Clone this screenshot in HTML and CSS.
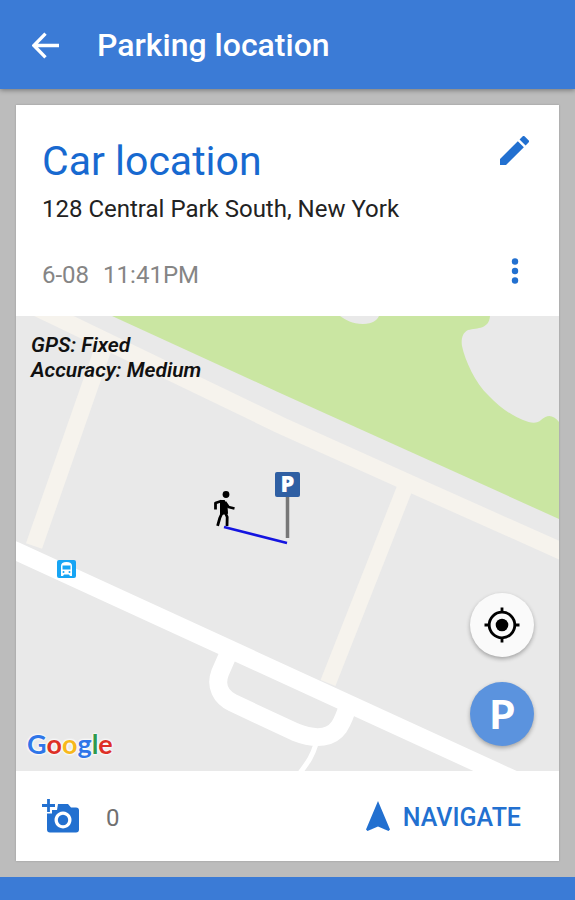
FILE: index.html
```html
<!DOCTYPE html>
<html lang="en">
<head>
<meta charset="utf-8">
<meta name="viewport" content="width=device-width, initial-scale=1">
<title>Parking location</title>
<link rel="stylesheet" href="styles.css">
</head>
<body>
<header class="app-bar">
  <button class="icon-button" type="button" aria-label="Back">
    <svg class="icon-back" viewBox="0 0 26 26"><path d="M13 1.500 1.800 13 13 24.500M2 13H26" fill="none" stroke="currentColor" stroke-width="3.200"/></svg>
  </button>
  <h1 class="app-title">Parking location</h1>
</header>
<main class="content">
  <article class="card">
    <section class="details">
      <div class="details-row">
        <h2 class="place">Car location</h2>
        <button class="icon-button" type="button" aria-label="Edit">
          <svg class="icon-edit" viewBox="3 3 18 18"><path fill="currentColor" d="M3 17.250V21h3.750L17.810 9.940l-3.750-3.750L3 17.250zM20.710 7.040a1 1 0 0 0 0-1.410l-2.340-2.340a1 1 0 0 0-1.410 0l-1.830 1.830 3.750 3.750 1.830-1.830z"/></svg>
        </button>
      </div>
      <p class="address">128 Central Park South, New York</p>
      <div class="details-row meta-row">
        <p class="meta"><span>6-08</span><span>11:41PM</span></p>
        <button class="icon-button" type="button" aria-label="More options">
          <svg class="icon-more" viewBox="0 0 28 28"><g fill="currentColor"><circle cx="14" cy="4.500" r="3.200"/><circle cx="14" cy="14" r="3.200"/><circle cx="14" cy="23.500" r="3.200"/></g></svg>
        </button>
      </div>
    </section>
    <section class="map" aria-label="Map">
      <svg class="map-canvas" viewBox="16 316 543 455" preserveAspectRatio="xMidYMid slice">
        <rect x="16" y="316" width="543" height="455" fill="#e9e9e9"/>
        <path fill="#cae6a2" d="M112 316 280 393 559 519V316z"/>
        <path fill="#e9e9e9" d="M340 316C346 320 352 324 363 324C373 324 377 320 379 316zM490 316C489 329 478 328 468 330C462 333 461 340 462 346C465 360 475 383 489 396C499 407 514 417 523 420C530 423 537 424 541 420C548 414 553 415 559 422V316z"/>
        <g fill="none" stroke="#f6f3ed">
          <path stroke-width="17" d="M20 300 54 316 280 425 420 488 570 555"/>
          <path stroke-width="17" d="M108 335 92 380 34 546"/>
          <path stroke-width="16" d="M408 480 404 490 328 683"/>
        </g>
        <g fill="none" stroke="#fff">
          <path stroke-width="18" d="M0 544 16 551 495 771 570 805"/>
          <path stroke-width="18" d="M230 650 220 673C215 686 221 697 233 703L295 732C318 741 332 737 339 727C344 719 346 713 348 705"/>
          <path stroke-width="5" d="M316 744C312 757 308 762 300 773"/>
        </g>
        <g>
          <rect x="57" y="560" width="19" height="18" rx="2" fill="#17a5f4"/>
          <path fill="#fff" d="M61 576V566Q61 562 66.500 562T72 566V576H70L69 574.500H64L63 576z"/>
          <path fill="#17a5f4" d="M62.500 565.500H70.500V569.500H62.500z"/>
          <circle cx="63.500" cy="572" r="1" fill="#17a5f4"/><circle cx="69.500" cy="572" r="1" fill="#17a5f4"/>
        </g>
        <path d="M287.500 497V538" stroke="#777" stroke-width="3.500"/>
        <path d="M224 527 287 543" stroke="#1414e0" stroke-width="2.600"/>
        <g>
          <circle cx="226" cy="494.500" r="3.400"/>
          <path d="M221 501H224L226.500 506 227 513 221 514z" stroke="#000" stroke-width="2"/>
          <path fill="none" stroke="#000" stroke-width="2.800" stroke-linejoin="round" d="M221.500 501 215.500 503V509.500M225 502 228.500 507 234.500 508.500M222.500 512 219.800 518 217.600 525.800M224.500 511 227.200 517 227 526"/>
        </g>
        <rect x="275" y="472" width="25" height="25" rx="2" fill="#2f5fa3"/>
        <text class="sign-letter" x="287.500" y="492" text-anchor="middle">P</text>
      </svg>
      <p class="gps">GPS: Fixed<br>Accuracy: Medium</p>
      <p class="google"><span class="g-blue">G</span><span class="g-red">o</span><span class="g-yellow">o</span><span class="g-blue">g</span><span class="g-green">l</span><span class="g-red">e</span></p>
      <div class="fabs">
        <button class="fab" type="button" aria-label="My location">
          <svg class="icon-locate" viewBox="0 0 36 36"><circle cx="18" cy="18" r="6.300"/><circle cx="18" cy="18" r="12.800" fill="none" stroke="#000" stroke-width="2.800"/><path d="M18 .5V6M18 30V35.500M.5 18H6M30 18H35.500" stroke="#000" stroke-width="2.800"/></svg>
        </button>
        <button class="fab fab-park" type="button">P</button>
      </div>
    </section>
    <footer class="actions">
      <button class="action" type="button" aria-label="Add photo">
        <svg class="icon-camera" viewBox="0 0 38 34"><path d="M6.500 0V13M0 6.500H13" stroke="currentColor" stroke-width="2.800" fill="none"/><path fill="currentColor" fill-rule="evenodd" d="M16 5H26L29 8.500H34Q37 8.500 37 11.500V30.500Q37 33.500 34 33.500H8Q5 33.500 5 30.500V14.500H10V11H15zM21 12.500a8.500 8.500 0 1 0 .01 0z"/><circle cx="21" cy="21" r="5.200" fill="currentColor"/></svg>
        <span class="action-text count">0</span>
      </button>
      <button class="action navigate" type="button">
        <svg class="icon-nav" viewBox="0 0 24 30"><path fill="currentColor" d="M12 0 24 28.500 22.500 30 12 25.500 1.500 30 0 28.500z"/></svg>
        <span class="action-text">NAVIGATE</span>
      </button>
    </footer>
  </article>
</main>
<div class="bottom-bar"></div>
</body>
</html>
```
FILE: styles.css
```css
* { box-sizing: border-box; }

body {
  margin: 0;
  min-height: 100vh;
  display: flex;
  flex-direction: column;
  background: #bcbcbc;
  font-family: Roboto, "Liberation Sans", sans-serif;
}

h1, h2, p { margin: 0; font-weight: 400; }

button {
  border: 0;
  padding: 0;
  background: none;
  font: inherit;
  color: inherit;
  cursor: pointer;
}

svg { display: block; }

.app-bar {
  display: flex;
  align-items: center;
  gap: 38px;
  padding: 25px 32px 24px;
  background: #3b7bd6;
  color: #fff;
  box-shadow: 0 1px 5px rgba(0, 0, 0, .4);
}

.app-title { font-size: 32px; line-height: 40px; font-weight: 500; }

.content {
  flex: 1;
  display: flex;
  flex-direction: column;
  padding: 16px;
}

.card {
  flex: 1;
  display: flex;
  flex-direction: column;
  background: #fff;
  box-shadow: 0 0 2px rgba(0, 0, 0, .2);
}

.details { padding: 30px 26px 23px; }

.details-row {
  display: flex;
  align-items: center;
  justify-content: space-between;
}

.place { font-size: 41px; line-height: 52px; color: #1769d0; }
.address { font-size: 24px; line-height: 44px; color: #222; }
.meta-row { margin-top: 26px; }
.meta { display: flex; gap: 14px; font-size: 24px; line-height: 36px; color: #858585; }

.icon-button { color: #2270d0; }
.app-bar .icon-button { color: #fff; }
.icon-back { width: 27px; height: 27px; }
.icon-edit { width: 29px; height: 29px; margin: 0 4px 22px 0; }
.icon-more { width: 28px; height: 28px; margin: 0 4px 8px 0; }

.map {
  flex: 1;
  position: relative;
  overflow: hidden;
  min-height: 320px;
}

.map-canvas {
  position: absolute;
  width: 100%;
  height: 100%;
}

.sign-letter { font: 800 22px "Open Sans", sans-serif; fill: #fff; }

.gps {
  position: absolute;
  top: 17px;
  left: 15px;
  font-size: 21px;
  line-height: 25px;
  font-weight: 600;
  font-style: italic;
  color: #111;
}

.google {
  position: absolute;
  left: 11px;
  bottom: 9px;
  font-family: Lato, sans-serif;
  font-size: 27px;
  line-height: 36px;
  font-weight: 700;
  text-shadow: 0 0 2px #fff, 0 0 3px #fff, 0 0 3px #fff;
}

.g-blue { color: #2f76e8; }
.g-red { color: #dd3027; }
.g-yellow { color: #f7b81c; }
.g-green { color: #2f9a4c; }

.fabs {
  position: absolute;
  right: 25px;
  bottom: 25px;
  display: flex;
  flex-direction: column;
  gap: 25px;
}

.fab {
  display: grid;
  place-items: center;
  width: 64px;
  height: 64px;
  border-radius: 50%;
  background: #fafafa;
  box-shadow: 0 2px 4px rgba(0, 0, 0, .3);
}

.fab-park {
  background: #5b93de;
  color: #fff;
  font: 900 40px Lato, sans-serif;
}

.icon-locate { width: 36px; height: 36px; }

.actions {
  display: flex;
  align-items: center;
  justify-content: space-between;
  height: 90px;
  padding: 0 38px 0 26px;
}

.action {
  display: flex;
  align-items: center;
  gap: 26px;
  font-size: 24px;
  line-height: 32px;
  color: #2270d0;
}

.action-text { padding-top: 3px; }
.count { color: #707070; }
.navigate { gap: 13px; font-size: 25px; font-weight: 500; }
.icon-camera { width: 38px; height: 34px; }
.icon-nav { width: 24px; height: 30px; }

.bottom-bar { height: 23px; background: #3b7bd6; }
```
